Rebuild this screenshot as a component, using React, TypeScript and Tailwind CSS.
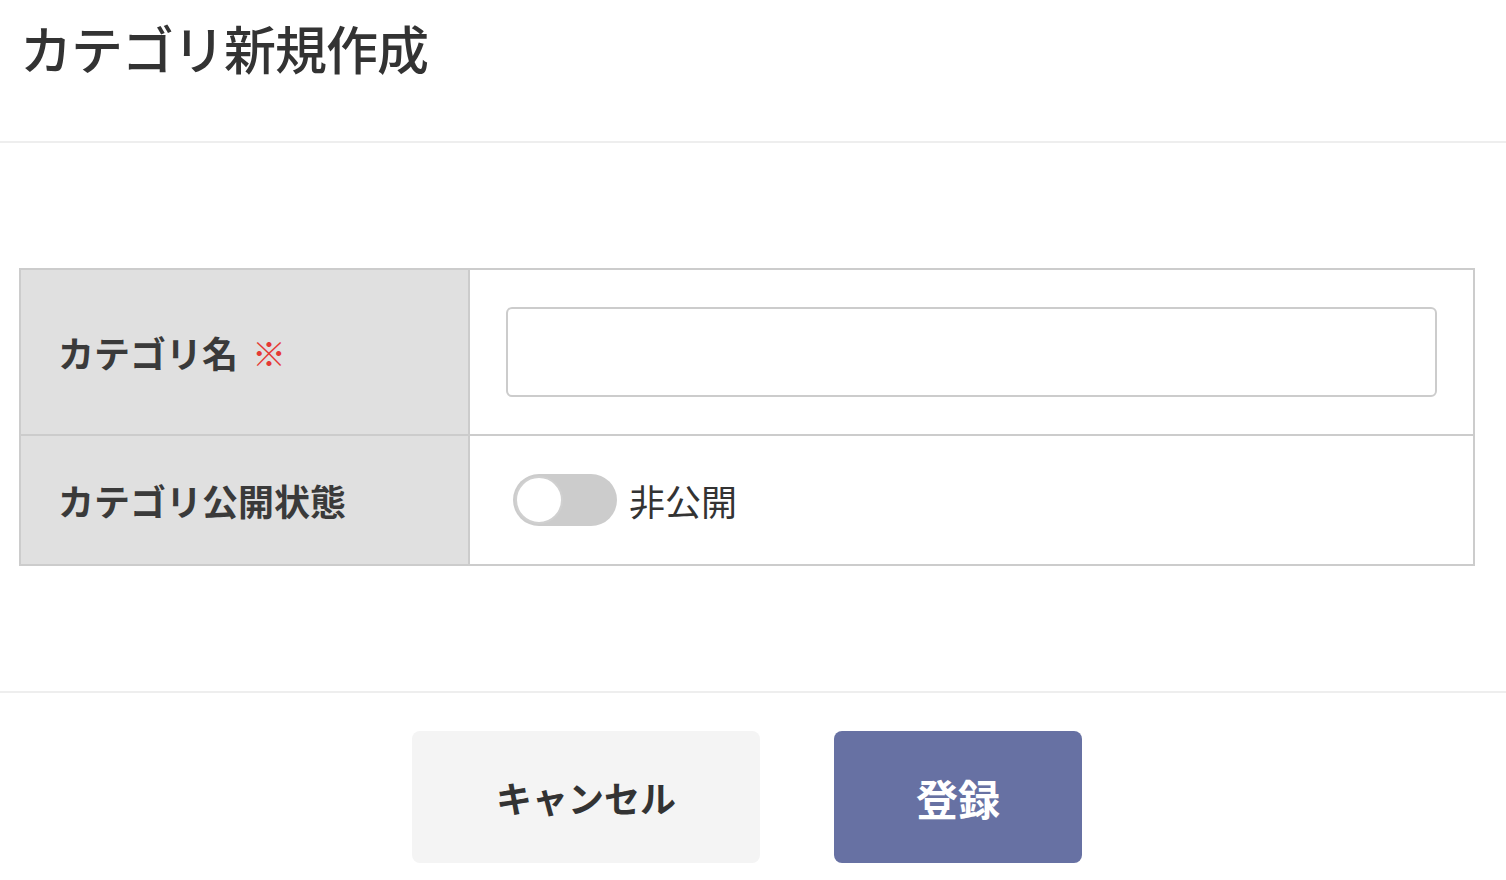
export default function App() {
  return (
    <div
      className="w-[1506px] h-[880px] bg-white text-[#333] overflow-hidden"
      style={{ fontFamily: '"Noto Sans CJK JP", "Noto Sans", sans-serif' }}
    >
      <div className="h-[143px] border-b-2 border-[#eeeeee] pl-[20px] pt-[22px]">
        <h1 className="text-[52px] leading-none font-medium tracking-[-1px]">カテゴリ新規作成</h1>
      </div>

      <div className="pt-[125px] pb-[125px] pl-[19px] pr-[31px]">
        <div className="grid grid-cols-[449px_1fr] border-2 border-[#cccccc]">
          <div className="h-[166px] bg-[#e0e0e0] border-r-2 border-b-2 border-[#cccccc] flex items-center pl-[37px]">
            <span className="text-[36px] font-bold text-[#3a3a3a]">カテゴリ名</span>
            <span className="ml-[14px] text-[34px] font-bold text-[#e53935]">※</span>
          </div>
          <div className="h-[166px] border-b-2 border-[#cccccc] flex items-center pl-[36px] pr-[36px]">
            <input
              type="text"
              className="w-full h-[90px] border-2 border-[#cccccc] rounded-[6px] bg-white outline-none"
            />
          </div>
          <div className="h-[128px] bg-[#e0e0e0] border-r-2 border-[#cccccc] flex items-center pl-[37px]">
            <span className="text-[36px] font-bold text-[#3a3a3a]">カテゴリ公開状態</span>
          </div>
          <div className="h-[128px] flex items-center pl-[43px] gap-[12px]">
            <div className="relative w-[104px] h-[52px] rounded-full bg-[#cccccc]">
              <div className="absolute left-[2px] top-[2px] w-[48px] h-[48px] rounded-full bg-white border-2 border-[#d0d0d0]" />
            </div>
            <span className="text-[36px] text-[#333]">非公開</span>
          </div>
        </div>
      </div>

      <div className="border-t-2 border-[#eeeeee] pt-[38px] pr-[12px] flex justify-center gap-[74px]">
        <button
          type="button"
          className="w-[348px] h-[132px] rounded-[8px] bg-[#f4f4f4] text-[36px] font-bold text-[#333]"
        >
          キャンセル
        </button>
        <button
          type="button"
          className="w-[248px] h-[132px] rounded-[8px] bg-[#6771a3] text-[42px] font-bold text-white"
        >
          登録
        </button>
      </div>
    </div>
  );
}
